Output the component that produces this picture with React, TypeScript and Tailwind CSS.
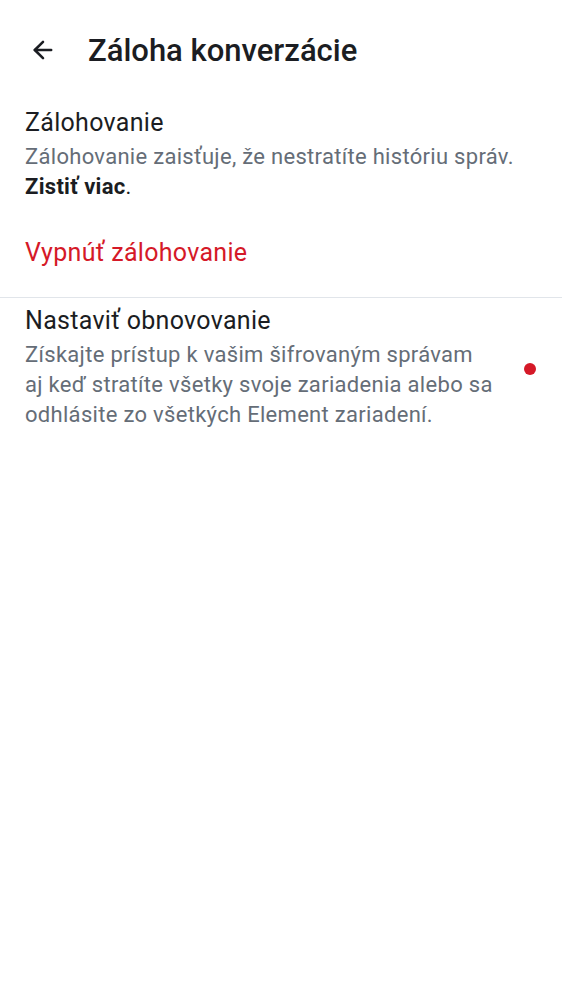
import { ArrowLeft } from "lucide-react";

export default function App() {
  return (
    <div
      className="w-[562px] h-[1000px] bg-white text-[#1b1d22]"
      style={{ fontFamily: "Roboto, 'Noto Sans', sans-serif" }}
    >
      <header className="flex items-center h-[100px] pl-[29px]">
        <ArrowLeft size={28} strokeWidth={2.2} className="text-[#1b1d22]" />
        <h1 className="ml-[31px] text-[31px] font-medium leading-none">
          Záloha konverzácie
        </h1>
      </header>

      <section className="px-[25px] pt-[6px]">
        <h2 className="text-[25px] tracking-[0.3px] leading-[34px]">Zálohovanie</h2>
        <p className="mt-[2px] text-[22px] tracking-[0.3px] leading-[30px] text-[#656d77]">
          Zálohovanie zaisťuje, že nestratíte históriu správ.
          <br />
          <b className="font-bold text-[#1b1d22]">Zistiť viac</b>
          <span className="text-[#1b1d22]">.</span>
        </p>
        <button className="mt-[34px] text-[25px] tracking-[0.3px] leading-[34px] text-[#d51928]">
          Vypnúť zálohovanie
        </button>
      </section>

      <div className="mt-[27px] h-px bg-[#e1e5ea]" />

      <section className="flex items-center pl-[25px] pr-[26px] pt-[6px]">
        <div className="flex-1">
          <h2 className="text-[25px] tracking-[0.3px] leading-[34px]">Nastaviť obnovovanie</h2>
          <p className="mt-[2px] text-[22px] tracking-[0.3px] leading-[30px] text-[#656d77]">
            Získajte prístup k vašim šifrovaným správam
            <br />
            aj keď stratíte všetky svoje zariadenia alebo sa
            <br />
            odhlásite zo všetkých Element zariadení.
          </p>
        </div>
        <span className="mt-[4px] w-[12px] h-[12px] rounded-full bg-[#d51928]" />
      </section>
    </div>
  );
}
